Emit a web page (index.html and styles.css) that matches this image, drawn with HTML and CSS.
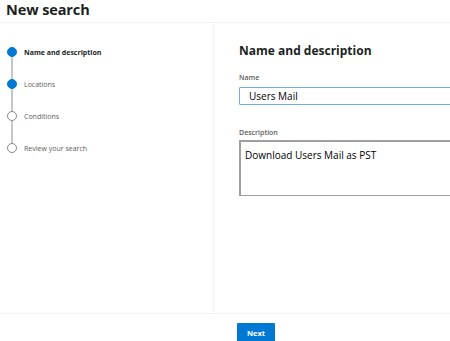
FILE: index.html
```html
<!DOCTYPE html>
<html lang="en">
<head>
    <meta charset="UTF-8">
    <title>New search</title>
    <link rel="stylesheet" href="styles.css">
</head>
<body>
    <div class="panel">
        <div class="panel-header">
            <h1 class="panel-title">New search</h1>
        </div>
        <div class="panel-body">
            <!-- Wizard steps -->
            <ul class="steps">
                <li class="step done current">
                    <span class="step-dot"></span>
                    <span class="step-label">Name and description</span>
                </li>
                <li class="step done">
                    <span class="step-dot"></span>
                    <span class="step-label">Locations</span>
                </li>
                <li class="step">
                    <span class="step-dot"></span>
                    <span class="step-label">Conditions</span>
                </li>
                <li class="step last">
                    <span class="step-dot"></span>
                    <span class="step-label">Review your search</span>
                </li>
            </ul>

            <!-- Form -->
            <div class="content">
                <h2 class="content-title">Name and description</h2>
                <label class="field-label">Name</label>
                <input class="text-input" type="text" value="Users Mail">
                <label class="field-label desc">Description</label>
                <textarea class="text-area">Download Users Mail as PST</textarea>
            </div>
        </div>
        <div class="panel-footer">
            <button class="button primary">Next</button>
        </div>
    </div>
</body>
</html>
```

FILE: styles.css
```css
:root {
    --primary-blue: #0078D4;
    --input-blue: #74ADE5;
    --text-primary: #201F1E;
    --text-secondary: #605E5C;
    --line-gray: #C8C6C4;
    --divider: #F3F2F1;
}

* {
    margin: 0;
    padding: 0;
    box-sizing: border-box;
    font-family: 'Open Sans', 'Noto Sans', sans-serif;
}

body {
    background: #FFFFFF;
    color: var(--text-primary);
    width: 450px;
    height: 341px;
    overflow: hidden;
}

.panel {
    display: flex;
    flex-direction: column;
    height: 341px;
}

.panel-header {
    height: 23px;
    padding-left: 6px;
    border-bottom: 1px solid var(--divider);
}

.panel-title {
    font-size: 14.5px;
    font-weight: 700;
    line-height: 20px;
    letter-spacing: -0.1px;
}

.panel-body {
    flex: 1;
    display: flex;
}

.steps {
    list-style: none;
    width: 214px;
    border-right: 1px solid var(--divider);
    padding-top: 13px;
    padding-left: 7px;
}

.step {
    position: relative;
    display: flex;
    align-items: center;
    gap: 7px;
    height: 32px;
}

.step::after {
    content: "";
    position: absolute;
    left: 4px;
    top: 21px;
    width: 2px;
    height: 22px;
    background: var(--line-gray);
}

.step.last::after {
    display: none;
}

.step-dot {
    width: 10px;
    height: 10px;
    border-radius: 50%;
    border: 1.5px solid #8A8886;
    background: #FFFFFF;
    flex-shrink: 0;
}

.step.done .step-dot {
    border-color: var(--primary-blue);
    background: var(--primary-blue);
}

.step-label {
    font-size: 7px;
    color: var(--text-secondary);
}

.step.current .step-label {
    font-weight: 700;
    color: var(--text-primary);
}

.content {
    flex: 1;
    padding: 20px 0 0 25px;
    display: flex;
    flex-direction: column;
    overflow: hidden;
}

.content-title {
    font-size: 12px;
    font-weight: 700;
    line-height: 16px;
    margin-bottom: 14px;
}

.field-label {
    font-size: 7px;
    font-weight: 600;
    color: var(--text-secondary);
    line-height: 10px;
    margin-bottom: 4px;
}

.field-label.desc {
    margin-top: 23px;
    margin-bottom: 2px;
}

.text-input {
    width: 240px;
    height: 18px;
    border: 1.5px solid var(--input-blue);
    border-radius: 1px;
    padding-left: 9px;
    font-size: 10px;
    color: #000000;
    outline: none;
    font-family: 'Open Sans', sans-serif;
}

.text-area {
    width: 240px;
    height: 56px;
    border: 1px solid #A19F9D;
    border-left-width: 2px;
    border-top-width: 2px;
    padding: 6px 4px;
    font-size: 10px;
    color: #000000;
    resize: none;
    outline: none;
}

.panel-footer {
    height: 28px;
    border-top: 1px solid var(--divider);
    display: flex;
    padding-top: 9px;
    padding-left: 237px;
}

.button {
    height: 19px;
    width: 38px;
    border: none;
    border-radius: 1px;
    font-size: 7.5px;
    font-weight: 700;
    cursor: pointer;
}

.button.primary {
    background: var(--primary-blue);
    color: #FFFFFF;
}
```
